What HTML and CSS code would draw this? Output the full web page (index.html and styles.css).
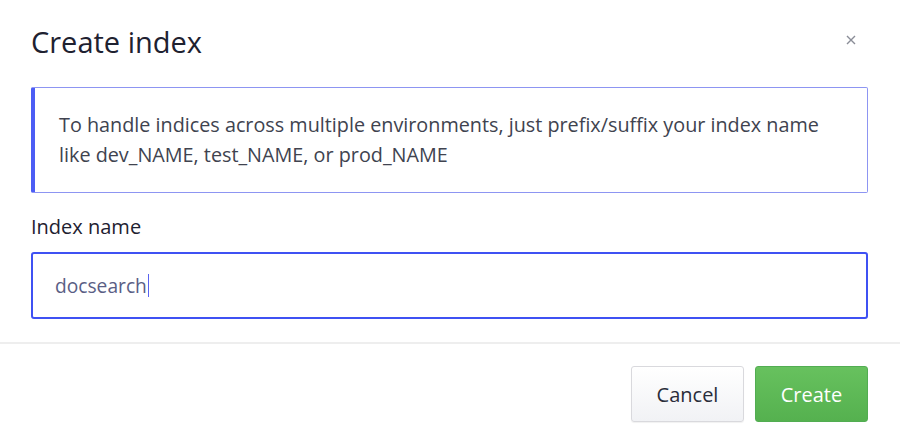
FILE: index.html
```html
<!DOCTYPE html>
<html>
<head>
<meta charset="utf-8">
<link rel="stylesheet" href="styles.css">
</head>
<body>
<div class="modal">
  <div class="modal-body">
    <div class="header">
      <h2 class="title">Create index</h2>
      <button class="close" aria-label="Close">
        <svg width="10" height="10" viewBox="0 0 10 10"><path d="M1 1L9 9M9 1L1 9" stroke="#8a8d97" stroke-width="1.4" fill="none"/></svg>
      </button>
    </div>
    <div class="callout">To handle indices across multiple environments, just prefix/suffix your index name like dev_NAME, test_NAME, or prod_NAME</div>
    <label class="label" for="idx">Index name</label>
    <div class="input"><span class="value">docsearch</span><span class="caret"></span></div>
  </div>
  <div class="footer">
    <button class="btn btn-cancel">Cancel</button>
    <button class="btn btn-create">Create</button>
  </div>
</div>
</body>
</html>
```
FILE: styles.css
```css
html, body {
  margin: 0;
  padding: 0;
  background: #ffffff;
}
body {
  font-family: "Open Sans", "Noto Sans", sans-serif;
  color: #2a2d3a;
}
.modal {
  width: 900px;
  height: 442px;
  display: flex;
  flex-direction: column;
}
.modal-body {
  padding: 22px 32px 23px 31px;
  display: flex;
  flex-direction: column;
}
.header {
  display: flex;
  justify-content: space-between;
  align-items: flex-start;
  height: 65px;
}
.title {
  margin: 0;
  font-size: 29px;
  font-weight: 400;
  line-height: 40px;
  color: #1e2130;
}
.close {
  border: 0;
  background: none;
  padding: 0;
  margin: 12px 11px 0 0;
  width: 12px;
  height: 12px;
  display: flex;
  align-items: center;
  justify-content: center;
}
.callout {
  border: 1px solid #8d95f2;
  border-left: 4px solid #4c5df5;
  border-radius: 2px;
  padding: 22px 24px 22px 24px;
  font-size: 19.8px;
  line-height: 30px;
  color: #40434f;
}
.label {
  margin-top: 20px;
  font-size: 20px;
  line-height: 28px;
  color: #1e2130;
}
.input {
  margin-top: 11px;
  height: 63px;
  border: 2px solid #3f51f3;
  border-radius: 3px;
  display: flex;
  align-items: center;
  padding-left: 22px;
  font-size: 19.2px;
  color: #5a5e85;
}
.caret {
  display: inline-block;
  width: 1px;
  height: 23px;
  background: #5a63f0;
  margin-left: 1px;
}
.footer {
  border-top: 2px solid #eeeeee;
  display: flex;
  justify-content: flex-end;
  gap: 11px;
  padding: 22px 32px 0 0;
}
.btn {
  height: 56px;
  width: 113px;
  border-radius: 3px;
  font-family: "Open Sans", "Noto Sans", sans-serif;
  font-size: 20px;
  cursor: pointer;
}
.btn-cancel {
  border: 1px solid #d9d9dd;
  background: linear-gradient(#ffffff, #f1f2f5);
  color: #2a2d3a;
  box-shadow: 0 1px 1px rgba(0,0,0,0.06);
}
.btn-create {
  border: 1px solid #52ad52;
  background: linear-gradient(#67c15e, #55b14f);
  color: #ffffff;
}
```
